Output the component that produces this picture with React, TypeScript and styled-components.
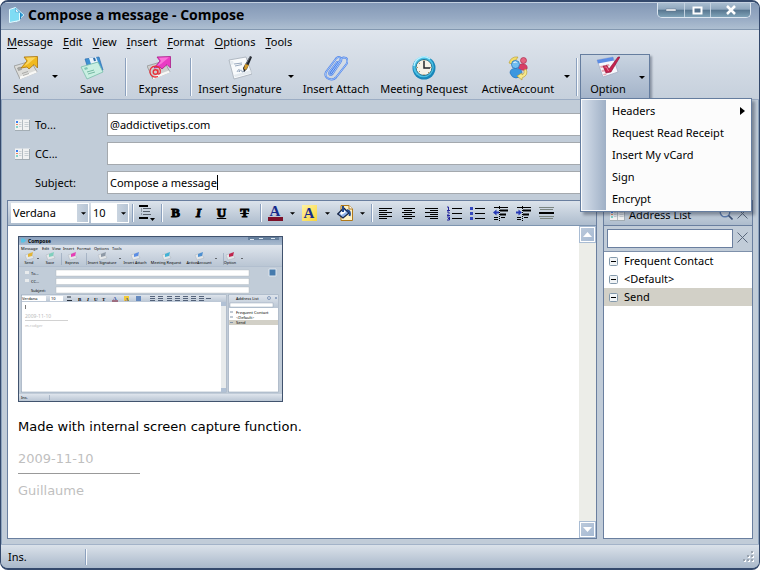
import React, { useState } from "react";
import styled, { createGlobalStyle, css } from "styled-components";

const ui = '"Noto Sans", "Open Sans", sans-serif';

const GlobalStyle = createGlobalStyle`
  *, *::before, *::after { box-sizing: border-box; }
  body { margin: 0; background: #fff; }
  button, input, select { font: inherit; color: inherit; margin: 0; }
  button { background: none; border: 0; padding: 0; cursor: default; }
`;

/* ---------- window frame ---------- */

const Window = styled.div`
  display: flex;
  flex-direction: column;
  min-height: 100vh;
  border: 1px solid #34496c;
  border-width: 2px 1px;
  border-radius: 8px;
  background: #c1ccd8;
  box-shadow: inset 1px 0 0 #8da3bd, inset -1px 0 0 #8da3bd;
  font: 11px/16px ${ui};
  color: #000;
  overflow: hidden;
`;

const TitleBar = styled.header`
  display: flex;
  align-items: flex-start;
  height: 28px;
  padding: 0 8px 0 7px;
  border-top: 1px solid #c3d0e0;
  border-bottom: 1px solid #8398b0;
  background: linear-gradient(#8398b6, #98abc4 60%, #aebfd1);
`;

const Title = styled.h1`
  display: flex;
  flex: 1;
  align-items: center;
  gap: 3px;
  height: 24px;
  margin: 0;
  font: 700 14px/20px "Open Sans", "Noto Sans", sans-serif;
`;

const Captions = styled.div`
  display: flex;
  border: 1px solid #dbe5ef;
  border-top: 0;
  border-radius: 0 0 5px 5px;
  overflow: hidden;
`;

const CaptionButton = styled.button<{ $wide?: boolean }>`
  display: flex;
  align-items: center;
  justify-content: center;
  width: ${(p) => (p.$wide ? 40 : 26)}px;
  height: 14px;
  background: linear-gradient(#a9bdd0 0, #8ea6bd 45%, #57758f 50%, #7fa3b8);
  & + & { border-left: 1px solid #c3d2e0; }
`;

const Commands = styled.div`
  border-bottom: 1px solid #9cadc4;
  background: linear-gradient(#dfe5ed, #c6d0dc);
`;

const MenuBar = styled.nav`
  display: flex;
  align-items: center;
  gap: 10px;
  height: 24px;
  padding: 0 6px;
`;

const Mnemonic = styled.span`
  text-decoration: underline;
  text-underline-offset: 2px;
`;

/* ---------- main toolbar ---------- */

const Toolbar = styled.div`
  display: flex;
  align-items: stretch;
  height: 45px;
  padding-left: 6px;
`;

const ToolButton = styled.button<{ $w: number }>`
  display: flex;
  flex-direction: column;
  align-items: center;
  justify-content: flex-end;
  width: ${(p) => p.$w}px;
  padding-bottom: 2px;
  white-space: nowrap;
`;

const DropButton = styled.button<{ $w?: number }>`
  display: flex;
  align-items: center;
  justify-content: center;
  width: ${(p) => p.$w ?? 18}px;
`;

const Divider = styled.span<{ $w?: number; $h?: number }>`
  display: flex;
  align-self: center;
  justify-content: center;
  width: ${(p) => p.$w ?? 14}px;
  height: ${(p) => p.$h ?? 38}px;
  &::before {
    content: "";
    width: 2px;
    background: linear-gradient(90deg, #8ca1be 50%, #f8fafc 50%);
  }
`;

const OptionGroup = styled.div`
  position: relative;
  display: flex;
  border: 1px solid #657d9f;
  border-bottom: 0;
  background: linear-gradient(#c9d4e1, #a3b3c9);
  box-shadow: 2px 2px 2px rgba(40, 50, 70, 0.4);
`;

const Menu = styled.ul`
  position: absolute;
  z-index: 2;
  top: 43px;
  left: -1px;
  width: 172px;
  margin: 0;
  padding: 1px 1px 1px 2px;
  border: 1px solid #657d9f;
  background: linear-gradient(90deg, #d5deea, #9fb0c6) 1px 1px / 24px calc(100% - 2px) no-repeat #fcfcfc;
  box-shadow: 3px 3px 3px rgba(40, 50, 70, 0.45);
  list-style: none;
`;

const MenuItem = styled.button`
  display: flex;
  align-items: center;
  justify-content: space-between;
  width: 100%;
  height: 22px;
  padding: 0 5px 0 29px;
  text-align: left;
  &:hover { background: rgba(130, 160, 200, 0.25); }
`;

/* ---------- header form ---------- */

const Form = styled.form`
  display: flex;
  flex-direction: column;
  gap: 6px;
  padding: 13px 96px 6px 14px;
`;

const FieldRow = styled.div`
  display: flex;
  align-items: center;
`;

const FieldLabel = styled.label`
  display: flex;
  align-items: center;
  width: 92px;
`;

const IconSlot = styled.span`
  display: flex;
  width: 20px;
`;

const FieldBox = styled.div`
  display: flex;
  flex: 1;
  align-items: center;
  height: 23px;
  padding: 0 2px;
  border: 1px solid #a4a9ae;
  background: #fff;
`;

const FieldInput = styled.input<{ $fit?: boolean }>`
  ${(p) => (p.$fit ? css`field-sizing: content;` : css`width: 100%;`)}
  padding: 0;
  border: 0;
  outline: 0;
  background: transparent;
  caret-color: ${(p) => (p.$fit ? "transparent" : "auto")};
`;

const TextCursor = styled.span`
  width: 1px;
  height: 15px;
  background: #000;
`;

/* ---------- work area ---------- */

const Work = styled.main`
  display: flex;
  flex: 1;
  gap: 6px;
  padding: 0 6px 5px;
`;

const Editor = styled.section`
  display: flex;
  flex: 1;
  flex-direction: column;
  min-width: 0;
  border: 1px solid #6a7f9f;
`;

const FormatBar = styled.div`
  display: flex;
  align-items: center;
  height: 25px;
  padding-left: 3px;
  border-bottom: 1px solid #7e95b0;
  background: linear-gradient(#dce3eb, #adbccd);
`;

const SelectWrap = styled.span<{ $w: number }>`
  display: grid;
  grid-template-columns: 1fr 12px;
  align-items: center;
  justify-items: center;
  width: ${(p) => p.$w}px;
  height: 20px;
  margin-right: 2px;
  background: linear-gradient(90deg, #c9d4e0, #b7c5d5) right 1px center / 11px 18px no-repeat #fff;
  select {
    grid-area: 1 / 1 / 2 / 3;
    width: 100%;
    height: 20px;
    padding: 0 0 0 2px;
    appearance: none;
    border: 0;
    outline: 0;
    background: transparent;
  }
  svg { grid-area: 1 / 2; pointer-events: none; }
`;

const FormatButton = styled.button<{ $w?: number }>`
  display: flex;
  align-items: center;
  justify-content: center;
  width: ${(p) => p.$w ?? 23}px;
  height: 22px;
`;

const Glyph = styled.span<{ $kind: "b" | "i" | "u" | "s" }>`
  font: 700 13px/16px "Liberation Serif", serif;
  -webkit-text-stroke: 1px #000;
  ${(p) => p.$kind === "i" && css`font-style: italic;`}
  ${(p) => p.$kind === "u" && css`text-decoration: underline;`}
  ${(p) => p.$kind === "s" && css`text-decoration: line-through 1px;`}
`;

const ColorGlyph = styled.span<{ $highlight?: boolean }>`
  width: 15px;
  height: 16px;
  border-bottom: ${(p) => (p.$highlight ? "0" : "4px solid #7c1028")};
  background: ${(p) => (p.$highlight ? "linear-gradient(135deg, #fff3a0, #f8d53c)" : "transparent")};
  color: #162b8c;
  font: 700 15px/${(p) => (p.$highlight ? 16 : 12)}px "Liberation Serif", serif;
  text-align: center;
`;

const EditorBody = styled.div`
  display: flex;
  flex: 1;
  background: #fff;
`;

const Page = styled.div`
  flex: 1;
  padding: 10px;
  outline: 0;
  font: 13px/16px "DejaVu Sans", Verdana, sans-serif;
  svg { display: block; width: 265px; height: 166px; margin-bottom: 17px; }
`;

const Para = styled.p<{ $faded?: boolean }>`
  margin: 0 0 16px;
  color: ${(p) => (p.$faded ? "#bfbfbf" : "#000")};
`;

const Rule = styled.hr`
  width: 122px;
  margin: -10px 0 9px;
  border: 0;
  border-top: 1px solid #999;
`;

const Scrollbar = styled.div`
  display: flex;
  flex-direction: column;
  justify-content: space-between;
  width: 17px;
  background: #ecede8;
`;

const ScrollButton = styled.button`
  display: flex;
  align-items: center;
  justify-content: center;
  width: 17px;
  height: 17px;
  border: 1px solid #a9bcd3;
  box-shadow: inset 0 0 0 1px #fff;
  background: linear-gradient(135deg, #bccadb, #a5b9d3);
`;

/* ---------- address list ---------- */

const Side = styled.aside`
  display: flex;
  flex-direction: column;
  width: 150px;
  border: 1px solid #6a7f9f;
`;

const SideHead = styled.div`
  display: flex;
  align-items: center;
  gap: 4px;
  height: 25px;
  padding: 3px 4px 0 6px;
  border-bottom: 1px solid #6a7f9f;
  background: linear-gradient(#dce3eb, #adbccd);
`;

const SideTitle = styled.h2`
  flex: 1;
  margin: 0;
  font-size: 11px;
  font-weight: 400;
`;

const SearchRow = styled.div`
  display: flex;
  align-items: center;
  gap: 4px;
  height: 26px;
  padding: 0 4px 0 3px;
  border-bottom: 1px solid #7e90aa;
  input {
    flex: 1;
    min-width: 0;
    height: 19px;
    border: 1px solid #6a7f9f;
    outline: 0;
    background: #fff;
  }
`;

const GroupList = styled.ul`
  flex: 1;
  margin: 0;
  padding: 0;
  background: #fff;
  list-style: none;
`;

const Group = styled.button<{ $on?: boolean }>`
  display: flex;
  align-items: center;
  gap: 6px;
  width: 100%;
  height: 18px;
  padding-left: 5px;
  background: ${(p) => (p.$on ? "#d2d0c7" : "transparent")};
`;

/* ---------- status bar ---------- */

const Status = styled.footer`
  display: flex;
  align-items: center;
  height: 24px;
  padding: 0 5px 0 7px;
  border-top: 1px solid #a3b3c8;
  background: linear-gradient(#dbe2ea, #a9b8ca);
`;

const Mode = styled.span`
  width: 71px;
`;

const Spacer = styled.span`
  flex: 1;
`;

/* ---------- drawings ---------- */

const Caret = ({ small }: { small?: boolean }) => (
  <svg width={small ? 5 : 6} height="3" viewBox="0 0 6 3" aria-hidden>
    <path d="M0 0h6L3 3z" fill="#000" />
  </svg>
);

const Cross = () => (
  <svg width="11" height="11" viewBox="0 0 11 11" aria-hidden>
    <path d="M.5.5l10 10M10.5.5l-10 10" stroke="#59677c" fill="none" />
  </svg>
);

const AppIcon = () => (
  <svg width="17" height="18" viewBox="0 0 17 18" aria-hidden>
    <path d="M8 2l8 7-8 7z" fill="#2e9bd6" stroke="#c9f1fd" />
    <path d="M1.500 3.500l6-2v4l4 1v8l-10 2z" fill="#7fdcf4" stroke="#e2faff" />
    <path d="M7.500 2v4l4 .5z" fill="#fff" stroke="#3ba4d3" strokeWidth=".7" />
    <path d="M12.500 7v6" stroke="#2587c0" />
  </svg>
);

const Book = () => (
  <svg width="15" height="12" viewBox="0 0 15 12" aria-hidden>
    <path d="M0 .5h7l.5.7.5-.7h7v10.700H0z" fill="#f1f2f2" />
    <path d="M0 11.500h15M14.500 1v10" stroke="#a3adb4" />
    <path d="M7.500 1v10" stroke="#b4bcc1" />
    <path d="M4 3.500h2.500M4 5.500h2.500M4 7.500h2.500M9.500 3.500h4M9.500 5.500h4M9.500 7.500h4" stroke="#c8cfd3" />
    <path d="M1 2h2v2H1z" fill="#3b7ef0" />
    <path d="M1 5h2v1H1z" fill="#f08a5c" />
    <path d="M1 7h2v2H1z" fill="#83d3ca" />
  </svg>
);

const Envelope = ({ at }: { at?: boolean }) => (
  <g>
    <path d="M0 10l17-5 6 11-17 7z" fill={at ? "#cfcfcf" : "#dcdcd9"} stroke="#8b8c8b" strokeWidth=".7" />
    <path d="M6 23.500l17-7-1-2-16 6z" fill="#f8f8f6" />
    {!at && <path d="M3.500 12l3-1 1 2.500-3 1z" fill="#a9aaa6" stroke="#8b8c8b" strokeWidth=".6" />}
    {!at && <path d="M8 17.500l6-2M9 19.500l6-2" stroke="#9a9b97" strokeWidth=".8" />}
  </g>
);

const Arrow = ({ fill, edge, shine }: { fill: string; edge: string; shine: string }) => (
  <g>
    <path d="M10 1L23.500.5v11.500l-3.500-3.500-5 4.500-2-2-6 1 6-7z" fill={fill} stroke={edge} strokeWidth=".8" />
    <path d="M12 1.800l10-.5-8 6.700-4 2 4-5z" fill={shine} opacity=".7" />
  </g>
);

const icons = {
  send: (
    <g>
      <Envelope />
      <Arrow fill="#f0b91f" edge="#a8740f" shine="#ffe27a" />
    </g>
  ),
  save: (
    <g>
      <path d="M5 3l14-2 4 13-13 5z" fill="#3d91d3" stroke="#2e6fb0" strokeWidth=".7" />
      <path d="M9 2l7-1 2 5-7 2z" fill="#eaf3fb" />
      <path d="M13 2l2-.3 1 3-2 .5z" fill="#2f6ba6" />
      <path d="M1 11l17-5 5 10-16 7z" fill="#c9efe2" stroke="#79bca9" strokeWidth=".8" />
      <path d="M7 16l7-2M8 18l7-2" stroke="#6cb29c" strokeWidth=".9" />
      <path d="M4 12l3-1 1 2-3 1z" fill="#7fc7b5" />
    </g>
  ),
  express: (
    <g>
      <Envelope at />
      <Arrow fill="#ea3cc4" edge="#a81f88" shine="#ff8ce4" />
      <circle cx="8.500" cy="16" r="2.300" fill="none" stroke="#e8303a" strokeWidth="1.400" />
      <path d="M10.800 13.500v4q1 1.500 2.300-.3c1-4-1-7-4.600-7-4 0-6 3-5.500 6.500s4 5.200 8 3.800" fill="none" stroke="#e8303a" strokeWidth="1.300" />
    </g>
  ),
  signature: (
    <g>
      <path d="M1 4l17-3 6 17-18 5z" fill="#f8fafc" stroke="#a4adb8" strokeWidth=".8" />
      <path d="M2 5h3l1 3-3 1M7 21l17-4-1-3-17 5z" fill="#dce3ea" opacity=".7" />
      <path d="M9 16c2-4 3-3 2 0 2-3 3-2 3 0l3-1M6 8l8-1M7 10l7-1.500" fill="none" stroke="#7f93ad" strokeWidth=".8" />
      <path d="M22 0l2 1-5 12-3 3-1-4z" fill="#20242b" />
      <path d="M17 8l4 1-3 5-2-1z" fill="#d39b2d" />
      <path d="M22 1l-4 7" stroke="#7b828d" strokeWidth=".8" />
    </g>
  ),
  attach: (
    <g fill="none" strokeLinecap="round">
      <path d="M7 17L16 4.500C19-1 26 2 22.500 8L12 21.500C8 26-1 22 2 16L12 2.500C15-.5 19 2 16.500 6L8.500 18C7 20 4 18.500 5.500 16L13 6" stroke="#4a7ee6" strokeWidth="1.900" />
      <path d="M7 17L16 4.500C19-1 26 2 22.500 8L12 21.500C8 26-1 22 2 16L12 2.500C15-.5 19 2 16.500 6L8.500 18C7 20 4 18.500 5.500 16L13 6" stroke="#b5d5ff" strokeWidth=".8" />
    </g>
  ),
  meeting: (
    <g>
      <circle cx="12" cy="12" r="11.500" fill="#1986b9" />
      <circle cx="11.500" cy="11" r="10.300" fill="#49c0e4" />
      <path d="M2 10A10 10 0 0 1 18 3" stroke="#b7efff" strokeWidth="1.500" fill="none" />
      <circle cx="12" cy="11.500" r="8" fill="#f5f2e8" stroke="#22708e" />
      <path d="M12 5v7h6" stroke="#20252b" strokeWidth="1.500" fill="none" />
      <path d="M12 4v1M12 18v1M5 11.500h1M18 11.500h1M7 7l1 1M16 16l1 1M7 16l1-1" stroke="#bb9357" />
    </g>
  ),
  account: (
    <g>
      <path d="M3 7Q5 0 12 1l-2 3Q7 3 6 8z" fill="#f4dd67" stroke="#b79a2b" strokeWidth=".6" />
      <circle cx="17.500" cy="4.500" r="3" fill="#e5637f" stroke="#aa2e50" strokeWidth=".7" />
      <path d="M12 12q1-5 6-4 4 1 3 5-4 3-9-1z" fill="#d83e65" stroke="#aa2e50" strokeWidth=".6" />
      <circle cx="9.500" cy="8.500" r="4" fill="#71bef1" stroke="#1d6db8" strokeWidth=".7" />
      <path d="M4 17q0-5 6-4.500 6 0 6 4.500-2 5-6 5t-6-5z" fill="#3b97df" stroke="#1d6db8" strokeWidth=".6" />
      <path d="M7.500 6.500q2-1 3 0" stroke="#fff" fill="none" />
      <path d="M20 13q3 6-4 9v2l-5-4 5-3v2q3-1 2-5z" fill="#f7e98c" stroke="#b79a2b" strokeWidth=".6" />
    </g>
  ),
  option: (
    <g>
      <path d="M1 4l16-3 5 15-15 5z" fill="#f6f7fc" stroke="#a0a9c0" strokeWidth=".7" />
      <path d="M1 4l16-3 1 3.500-16 3z" fill="#5b8ce4" />
      <path d="M4 10l3-.6.7 2-3 .6zM5.500 14l3-.6.7 2-3 .6zM7 18l3-.7.5 1.500-2.700.7zM10 8.500l3-.6.7 2-3 .6z" fill="#e6a8b5" />
      <path d="M7 10l4-.5 2 3.500L22 1h2l-9 15-5 1z" fill="#c4224e" stroke="#8d1236" strokeWidth=".6" />
      <path d="M8.500 11h2l2 4" stroke="#ee7d96" fill="none" />
    </g>
  ),
};

const Icon = ({ name }: { name: keyof typeof icons }) => (
  <svg width="24" height="25" viewBox="0 0 24 25" aria-hidden>{icons[name]}</svg>
);

const Lines = ({ kind }: { kind: "left" | "center" | "right" }) => {
  const widths = [13, 8, 13, 8, 13, 8];
  return (
    <svg width="13" height="13" viewBox="0 0 13 13" aria-hidden>
      {widths.map((w, i) => {
        const x = kind === "left" ? 0 : kind === "right" ? 13 - w : Math.floor((13 - w) / 2);
        return <path key={i} d={`M${x} ${i * 2 + 1}.5h${w}`} stroke="#000" />;
      })}
    </svg>
  );
};

const ListIcon = ({ numbered }: { numbered?: boolean }) => (
  <svg width="15" height="15" viewBox="0 0 15 15" aria-hidden>
    <path d="M5 2.500h10M5 7.500h10M5 12.500h10" stroke="#000" />
    {numbered
      ? <path d="M0 1h1.500v3M0 4.500h3M0 6h2v1.500L0 9.500h3M0 11h2.500v3H0M1 12.500h1" stroke="#22229c" fill="none" />
      : <path d="M0 1h3v3H0zM0 6h3v3H0zM0 11h3v3H0z" fill="#3447bd" />}
  </svg>
);

const IndentIcon = ({ out }: { out?: boolean }) => (
  <svg width="15" height="15" viewBox="0 0 15 15" aria-hidden>
    <path d="M1 1.500h14M1 11.500h4M8 11.500h4M1 13.500h4" stroke="#000" />
    <path d="M7 4.500h8M7 8.500h6" stroke="#000" strokeWidth="2" />
    <path d="M6.500 0v15" stroke="#000" strokeDasharray="1 1" />
    <path d={out ? "M0 6.500l3.500-3v2H6v2H3.500v2z" : "M6 6.500l-3.500-3v2H0v2h2.500v2z"} fill="#2638b5" />
  </svg>
);

const SpacingIcon = () => (
  <svg width="17" height="17" viewBox="0 0 17 17" aria-hidden>
    <path d="M0 1h9M0 13h9" stroke="#000" strokeWidth="2" />
    <path d="M4 3.500h8M4 6.500h7M4 9.500h8M2 4h1M2 6h1M2 9h1" stroke="#58616c" />
    <path d="M11 13h5l-2.500 3z" fill="#000" />
  </svg>
);

const HorizontalRuleIcon = () => (
  <svg width="15" height="13" viewBox="0 0 15 13" aria-hidden>
    <path d="M0 .5h15M1 2.500h13M0 9.500h15M1 11.500h13" stroke="#7b8580" />
    <path d="M0 6h15" stroke="#000" strokeWidth="2" />
  </svg>
);

const BucketIcon = () => (
  <svg width="17" height="16" viewBox="0 0 17 16" aria-hidden>
    <path d="M4 .5h8l3.500 3.500v11.500H4z" fill="#fff2c5" stroke="#b07818" />
    <path d="M12 .5V4h3.500" fill="#fff" stroke="#b07818" />
    <path d="M.7 9l6-6 5.300 5-6 5z" fill="#8fb2ea" stroke="#192849" strokeWidth="1.300" />
    <path d="M3 8l3.500-3.500L9 7 4.500 10z" fill="#fff" />
    <path d="M6 1v6M10 5q4 1 2.500 6" stroke="#23498f" strokeWidth="2" fill="none" />
  </svg>
);

const MinusBox = () => (
  <svg width="9" height="9" viewBox="0 0 9 9" aria-hidden>
    <rect x=".5" y=".5" width="8" height="8" rx="1" fill="#f1f4f6" stroke="#8398aa" />
    <path d="M2 4.500h5" stroke="#000" />
  </svg>
);

const Magnifier = () => (
  <svg width="14" height="14" viewBox="0 0 14 14" aria-hidden>
    <circle cx="6" cy="6" r="4.800" fill="#dce6f0" stroke="#5b7cae" strokeWidth="1.400" />
    <path d="M9.500 9.500l4 4" stroke="#3d5277" strokeWidth="1.600" />
  </svg>
);

const GripIcon = () => (
  <svg width="11" height="11" viewBox="0 0 11 11" aria-hidden>
    {[[8, 0], [4, 4], [8, 4], [0, 8], [4, 8], [8, 8]].map(([x, y]) => (
      <g key={`${x}-${y}`}>
        <path d={`M${x + 1} ${y + 1}h2v2h-2z`} fill="#fff" />
        <path d={`M${x} ${y}h2v2h-2z`} fill="#9aa4b0" />
      </g>
    ))}
  </svg>
);

const miniTools: [number, string, string][] = [
  [11, "Send", "#e2b436"], [32, "Save", "#7fcfbd"], [54, "Express", "#e53fb5"], [84, "Insert Signature", "#8e99a6"],
  [117, "Insert Attach", "#5b8de4"], [148, "Meeting Request", "#42b1d4"], [181, "ActiveAccount", "#4d8fd0"], [212, "Option", "#c0244c"],
];

const MiniWindow = () => (
  <svg viewBox="0 0 265 166" role="img" aria-label="Compose window" fontFamily={ui} fontSize="4">
    <defs>
      <linearGradient id="miniTitle" x2="0" y2="1"><stop stopColor="#8a9fbc" /><stop offset="1" stopColor="#a9bbcf" /></linearGradient>
      <linearGradient id="miniBar" x2="0" y2="1"><stop stopColor="#dee4ec" /><stop offset="1" stopColor="#bac6d4" /></linearGradient>
    </defs>
    <rect x=".5" y=".5" width="264" height="165" fill="#c1ccd8" stroke="#41536e" />
    <rect x="1" y="1" width="263" height="8" fill="url(#miniTitle)" />
    <path d="M3 2.500h3l2 2-2 2H3z" fill="#57c3e6" />
    <text x="10" y="6.500" fontWeight="700" fontSize="5">Compose</text>
    <path d="M230 1h31v3h-31z" fill="#657f9c" />
    <path d="M232 3.500h4M241 2.500h4M253 2.500h4" stroke="#dce6f0" />
    <rect x="1" y="9" width="263" height="21" fill="url(#miniBar)" />
    {[[3, "Message"], [24, "Edit"], [34, "View"], [45, "Insert"], [59, "Format"], [76, "Options"], [94, "Tools"]].map(([x, t]) => (
      <text key={t} x={x} y="14">{t}</text>
    ))}
    {miniTools.map(([x, t, c]) => (
      <g key={t}>
        <path d={`M${x - 4} 19l6-2 3 5-7 2z`} fill="#e4e7e9" stroke="#929aa4" strokeWidth=".3" />
        <path d={`M${x - 1} 18l5-2-1 4-4 1z`} fill={c} />
        <text x={x} y="28" textAnchor="middle" fontSize="3.800">{t}</text>
      </g>
    ))}
    <path d="M43.500 17v12M68.500 17v12M205.500 17v12" stroke="#8295ad" strokeWidth=".5" />
    <path d="M19 22h2l-1 1zM101 22h2l-1 1zM197 22h2l-1 1zM223 22h2l-1 1z" />
    <path d="M1 30.500h263" stroke="#a3b3c6" strokeWidth=".5" />
    {[["To...", 34], ["CC...", 42.500], ["Subject:", 51]].map(([t, y]) => (
      <g key={t}>
        <rect x="38" y={y} width="193" height="6" fill="#fff" stroke="#adb4bb" strokeWidth=".4" />
        <text x="13" y={Number(y) + 4.500}>{t}</text>
      </g>
    ))}
    <path d="M7 35h4v3H7zM7 43h4v3H7z" fill="#e8ebed" />
    <path d="M251 33h7v7h-7z" fill="#467bad" stroke="#e0e7ee" />
    <rect x="3.500" y="59" width="205" height="97" fill="#fff" stroke="#8394aa" strokeWidth=".5" />
    <rect x="4" y="59" width="204" height="7" fill="url(#miniBar)" />
    <path d="M4 60h24v5H4zM32 60h13v5H32z" fill="#fff" />
    <text x="4" y="64">Verdana</text><text x="33" y="64">10</text>
    <path d="M49 61h4M49 64.500h5" stroke="#27303c" />
    <g fontFamily='"Liberation Serif", serif' fontWeight="700" fontSize="5">
      <text x="60" y="64.500">B</text><text x="69" y="64.500" fontStyle="italic">I</text>
      <text x="76" y="64.500">U</text><text x="84" y="64.500">T</text>
      <path d="M106 60h5v5h-5z" fill="#f1ca37" />
      <text x="95" y="64" fill="#263f99">A</text><text x="107" y="64.500" fill="#263f99">A</text>
    </g>
    <path d="M94 65h6" stroke="#7c1028" />
    <path d="M118 60h5v5h-5z" fill="#668abf" />
    <path d="M132 60.500h5M132 62.500h5M132 64.500h5M140 60.500h5M140 62.500h5M140 64.500h5M149 60.500h5M149 62.500h5M149 64.500h5M157 60.500h5M157 62.500h5M157 64.500h5M165 60.500h5M165 62.500h5M165 64.500h5M173 60.500h5M173 62.500h5M173 64.500h5M181 60.500h5M181 62.500h5M181 64.500h5M188 62.500h5" stroke="#35455f" strokeWidth=".8" />
    <rect x="203" y="66" width="5" height="90" fill="#e8ebec" />
    <path d="M203 66h5v4h-5zM203 152h5v4h-5z" fill="#b1c1d5" />
    <path d="M7.500 69v4" stroke="#222" strokeWidth=".6" />
    <text x="7" y="82" fill="#bbb" fontSize="5">2009-11-10</text>
    <path d="M7 84.500h43" stroke="#b4b4b4" strokeWidth=".6" />
    <text x="7" y="91" fill="#bbb" fontSize="4">m.rodger</text>
    <rect x="210.500" y="59" width="50" height="97" fill="#fff" stroke="#8394aa" strokeWidth=".5" />
    <rect x="211" y="59" width="49" height="13" fill="url(#miniBar)" />
    <text x="218" y="64">Address List</text>
    <circle cx="251" cy="62" r="1.500" fill="none" stroke="#4f6f9f" strokeWidth=".6" />
    <path d="M257 61l2 2m0-2l-2 2" stroke="#4f6f9f" strokeWidth=".5" />
    <rect x="212" y="67" width="43" height="4" fill="#fff" stroke="#8394aa" strokeWidth=".4" />
    <rect x="211" y="84" width="49" height="5" fill="#d2d0c7" />
    {[["Frequent Contact", 77.500], ["<Default>", 82.500], ["Send", 88]].map(([t, y]) => (
      <g key={t}>
        <path d={`M212 ${Number(y) - 1.500}h3`} stroke="#8295a9" />
        <text x="218" y={y}>{t}</text>
      </g>
    ))}
    <rect x="1" y="158" width="263" height="7" fill="url(#miniBar)" />
    <text x="3" y="163">Ins.</text>
    <path d="M31.500 159v5" stroke="#8295ad" strokeWidth=".5" />
  </svg>
);

/* ---------- page ---------- */

const menus = ["Message", "Edit", "View", "Insert", "Format", "Options", "Tools"];
const optionItems = ["Headers", "Request Read Receipt", "Insert My vCard", "Sign", "Encrypt"];
const groups = ["Frequent Contact", "<Default>", "Send"];

export default function App() {
  const [to, setTo] = useState("@addictivetips.com");
  const [cc, setCc] = useState("");
  const [subject, setSubject] = useState("Compose a message");
  const [open, setOpen] = useState(true);
  const [group, setGroup] = useState("Send");
  const toggle = () => setOpen((v) => !v);

  return (
    <>
      <GlobalStyle />
      <Window>
        <TitleBar>
          <Title><AppIcon />Compose a message - Compose</Title>
          <Captions>
            <CaptionButton aria-label="Minimize">
              <svg width="12" height="4" viewBox="0 0 12 4"><path d="M1 1h10v2H1z" fill="#fff" stroke="#5b6f85" strokeWidth=".5" /></svg>
            </CaptionButton>
            <CaptionButton aria-label="Maximize">
              <svg width="11" height="9" viewBox="0 0 11 9"><path d="M1.500 1.500h8v6h-8z" fill="#54718c" stroke="#fff" strokeWidth="2" /></svg>
            </CaptionButton>
            <CaptionButton $wide aria-label="Close">
              <svg width="12" height="10" viewBox="0 0 12 10"><path d="M2 1l8 8M10 1L2 9" stroke="#fff" strokeWidth="2.500" /></svg>
            </CaptionButton>
          </Captions>
        </TitleBar>

        <Commands>
          <MenuBar>
            {menus.map((m) => (
              <button key={m}><Mnemonic>{m[0]}</Mnemonic>{m.slice(1)}</button>
            ))}
          </MenuBar>
          <Toolbar>
            <ToolButton $w={38}><Icon name="send" />Send</ToolButton>
            <DropButton $w={20} aria-label="Send options"><Caret /></DropButton>
            <ToolButton $w={54}><Icon name="save" />Save</ToolButton>
            <Divider />
            <ToolButton $w={51}><Icon name="express" />Express</ToolButton>
            <Divider />
            <ToolButton $w={84}><Icon name="signature" />Insert Signature</ToolButton>
            <DropButton aria-label="Choose signature"><Caret /></DropButton>
            <ToolButton $w={72}><Icon name="attach" />Insert Attach</ToolButton>
            <ToolButton $w={104}><Icon name="meeting" />Meeting Request</ToolButton>
            <ToolButton $w={84}><Icon name="account" />ActiveAccount</ToolButton>
            <DropButton $w={14} aria-label="Choose account"><Caret /></DropButton>
            <Divider $w={6} />
            <OptionGroup>
              <ToolButton $w={54} onClick={toggle}><Icon name="option" />Option</ToolButton>
              <DropButton $w={14} aria-label="Open options" aria-expanded={open} onClick={toggle}><Caret /></DropButton>
              {open && (
                <Menu>
                  {optionItems.map((item, i) => (
                    <li key={item}>
                      <MenuItem>
                        {item}
                        {i === 0 && <svg width="5" height="8" viewBox="0 0 5 8" aria-hidden><path d="M0 0l5 4-5 4z" /></svg>}
                      </MenuItem>
                    </li>
                  ))}
                </Menu>
              )}
            </OptionGroup>
          </Toolbar>
        </Commands>

        <Form onSubmit={(e) => e.preventDefault()}>
          <FieldRow>
            <FieldLabel htmlFor="to"><IconSlot><Book /></IconSlot>To...</FieldLabel>
            <FieldBox><FieldInput id="to" value={to} onChange={(e) => setTo(e.target.value)} /></FieldBox>
          </FieldRow>
          <FieldRow>
            <FieldLabel htmlFor="cc"><IconSlot><Book /></IconSlot>CC...</FieldLabel>
            <FieldBox><FieldInput id="cc" value={cc} onChange={(e) => setCc(e.target.value)} /></FieldBox>
          </FieldRow>
          <FieldRow>
            <FieldLabel htmlFor="subject"><IconSlot />Subject:</FieldLabel>
            <FieldBox>
              <FieldInput id="subject" $fit value={subject} onChange={(e) => setSubject(e.target.value)} />
              <TextCursor />
            </FieldBox>
          </FieldRow>
        </Form>

        <Work>
          <Editor>
            <FormatBar>
              <SelectWrap $w={78}>
                <select aria-label="Font" defaultValue="Verdana"><option>Verdana</option><option>Arial</option></select>
                <Caret small />
              </SelectWrap>
              <SelectWrap $w={38}>
                <select aria-label="Size" defaultValue="10"><option>10</option><option>12</option></select>
                <Caret small />
              </SelectWrap>
              <Divider $w={4} $h={18} />
              <FormatButton $w={25} aria-label="Line spacing"><SpacingIcon /></FormatButton>
              <Divider $w={4} $h={18} />
              <FormatButton aria-label="Bold"><Glyph $kind="b">B</Glyph></FormatButton>
              <FormatButton aria-label="Italic"><Glyph $kind="i">I</Glyph></FormatButton>
              <FormatButton aria-label="Underline"><Glyph $kind="u">U</Glyph></FormatButton>
              <FormatButton aria-label="Strikethrough"><Glyph $kind="s">T</Glyph></FormatButton>
              <Divider $w={10} $h={18} />
              <FormatButton $w={18} aria-label="Text color"><ColorGlyph>A</ColorGlyph></FormatButton>
              <FormatButton $w={16} aria-label="Choose text color"><Caret small /></FormatButton>
              <FormatButton $w={18} aria-label="Highlight"><ColorGlyph $highlight>A</ColorGlyph></FormatButton>
              <FormatButton $w={18} aria-label="Choose highlight"><Caret small /></FormatButton>
              <FormatButton $w={18} aria-label="Background"><BucketIcon /></FormatButton>
              <FormatButton $w={16} aria-label="Choose background"><Caret small /></FormatButton>
              <Divider $w={4} $h={18} />
              <FormatButton aria-label="Align left"><Lines kind="left" /></FormatButton>
              <FormatButton aria-label="Align center"><Lines kind="center" /></FormatButton>
              <FormatButton aria-label="Align right"><Lines kind="right" /></FormatButton>
              <FormatButton aria-label="Numbered list"><ListIcon numbered /></FormatButton>
              <FormatButton aria-label="Bulleted list"><ListIcon /></FormatButton>
              <FormatButton aria-label="Decrease indent"><IndentIcon out /></FormatButton>
              <FormatButton aria-label="Increase indent"><IndentIcon /></FormatButton>
              <FormatButton aria-label="Horizontal rule"><HorizontalRuleIcon /></FormatButton>
            </FormatBar>
            <EditorBody>
              <Page contentEditable suppressContentEditableWarning role="textbox" aria-label="Message body" spellCheck={false}>
                <MiniWindow />
                <Para>Made with internal screen capture function.</Para>
                <Para $faded>2009-11-10</Para>
                <Rule />
                <Para $faded>Guillaume</Para>
              </Page>
              <Scrollbar>
                <ScrollButton aria-label="Scroll up">
                  <svg width="9" height="5" viewBox="0 0 9 5"><path d="M0 5L4.500 0 9 5z" fill="#fff" /></svg>
                </ScrollButton>
                <ScrollButton aria-label="Scroll down">
                  <svg width="9" height="5" viewBox="0 0 9 5"><path d="M0 0l4.500 5L9 0z" fill="#fff" /></svg>
                </ScrollButton>
              </Scrollbar>
            </EditorBody>
          </Editor>

          <Side>
            <SideHead>
              <Book />
              <SideTitle>Address List</SideTitle>
              <button aria-label="Find contact"><Magnifier /></button>
              <button aria-label="Close address list"><Cross /></button>
            </SideHead>
            <SearchRow>
              <input type="text" aria-label="Search contacts" />
              <button aria-label="Clear search"><Cross /></button>
            </SearchRow>
            <GroupList>
              {groups.map((g) => (
                <li key={g}>
                  <Group $on={g === group} onClick={() => setGroup(g)}><MinusBox />{g}</Group>
                </li>
              ))}
            </GroupList>
          </Side>
        </Work>

        <Status>
          <Mode>Ins.</Mode>
          <Divider $h={16} />
          <Spacer />
          <GripIcon />
        </Status>
      </Window>
    </>
  );
}
